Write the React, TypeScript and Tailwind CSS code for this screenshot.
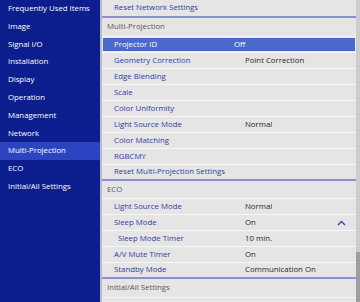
const sideItems = [
  "Frequently Used Items",
  "Image",
  "Signal I/O",
  "Installation",
  "Display",
  "Operation",
  "Management",
  "Network",
  "Multi-Projection",
  "ECO",
  "Initial/All Settings",
];

type Row = { label: string; value?: string; sub?: boolean; active?: boolean; open?: boolean };

const multiRows: Row[] = [
  { label: "Projector ID", value: "Off", active: true },
  { label: "Geometry Correction", value: "Point Correction" },
  { label: "Edge Blending" },
  { label: "Scale" },
  { label: "Color Uniformity" },
  { label: "Light Source Mode", value: "Normal" },
  { label: "Color Matching" },
  { label: "RGBCMY" },
  { label: "Reset Multi-Projection Settings" },
];

const ecoRows: Row[] = [
  { label: "Light Source Mode", value: "Normal" },
  { label: "Sleep Mode", value: "On", open: true },
  { label: "Sleep Mode Timer", value: "10 min.", sub: true },
  { label: "A/V Mute Timer", value: "On" },
  { label: "Standby Mode", value: "Communication On" },
];

const ChevronUp = () => (
  <svg width="9" height="6" viewBox="0 0 9 6" className="absolute right-[10px] top-[5px]">
    <polyline points="1,5 4.5,1.5 8,5" fill="none" stroke="#3646a8" strokeWidth="1.4" />
  </svg>
);

const MenuRow = ({ row, last, h = "h-[16px]" }: { row: Row; last?: boolean; h?: string }) => {
  const border = last
    ? "border-b-2 border-[#8c92cf]"
    : "border-b border-[#f7f7f7]";
  if (row.active) {
    return (
      <div className={`flex ${h} shrink-0 items-center ${border}`}>
        <div className="flex h-full w-full items-center border border-[#e3e8f7] bg-[#4a69cc] text-white">
          <span className="w-[131px] pl-[11px]">{row.label}</span>
          <span>{row.value}</span>
        </div>
      </div>
    );
  }
  return (
    <div className={`relative flex ${h} shrink-0 items-center ${border}`}>
      <span className={`w-[143px] text-[#2f3c9e] ${row.sub ? "pl-[16px]" : "pl-[12px]"}`}>
        {row.label}
      </span>
      {row.value && <span className="text-[#262626]">{row.value}</span>}
      {row.open && <ChevronUp />}
    </div>
  );
};

const Header = ({ title, h }: { title: string; h: string }) => (
  <div className={`flex ${h} shrink-0 items-center border-b border-[#f7f7f7] pl-[5px] text-[#575757]`}>
    {title}
  </div>
);

export default function App() {
  return (
    <div
      className="flex h-[302px] w-[360px] overflow-hidden bg-[#e5e5e5] text-[7.8px] font-medium"
      style={{ fontFamily: '"Open Sans", "Noto Sans", sans-serif' }}
    >
      {/* left menu */}
      <div className="flex w-[100px] shrink-0 flex-col bg-[#0c1e8e] text-white">
        {sideItems.map((s) => (
          <div
            key={s}
            className={`flex h-[17.8px] shrink-0 items-center pl-[8px] ${
              s === "Multi-Projection" ? "bg-[#2d44c2]" : ""
            }`}
          >
            {s}
          </div>
        ))}
      </div>

      {/* right list */}
      <div className="flex w-[256px] shrink-0 flex-col border-l-2 border-[#bdbdbd]">
        <MenuRow row={{ label: "Reset Network Settings" }} last h="h-[18px]" />
        <Header title="Multi-Projection" h="h-[19px]" />
        {multiRows.map((r, i) => (
          <MenuRow key={r.label} row={r} last={i === multiRows.length - 1} />
        ))}
        <Header title="ECO" h="h-[18px]" />
        {ecoRows.map((r, i) => (
          <MenuRow key={r.label + i} row={r} last={i === ecoRows.length - 1} />
        ))}
        <Header title="Initial/All Settings" h="h-[19px]" />
        <div className="h-[16px] shrink-0" />
      </div>

      {/* scrollbar */}
      <div className="flex w-[4px] shrink-0 flex-col bg-[#cdcdcd]">
        <div className="h-[252px] shrink-0" />
        <div className="flex-1 bg-[#9e9e9e]" />
      </div>
    </div>
  );
}
